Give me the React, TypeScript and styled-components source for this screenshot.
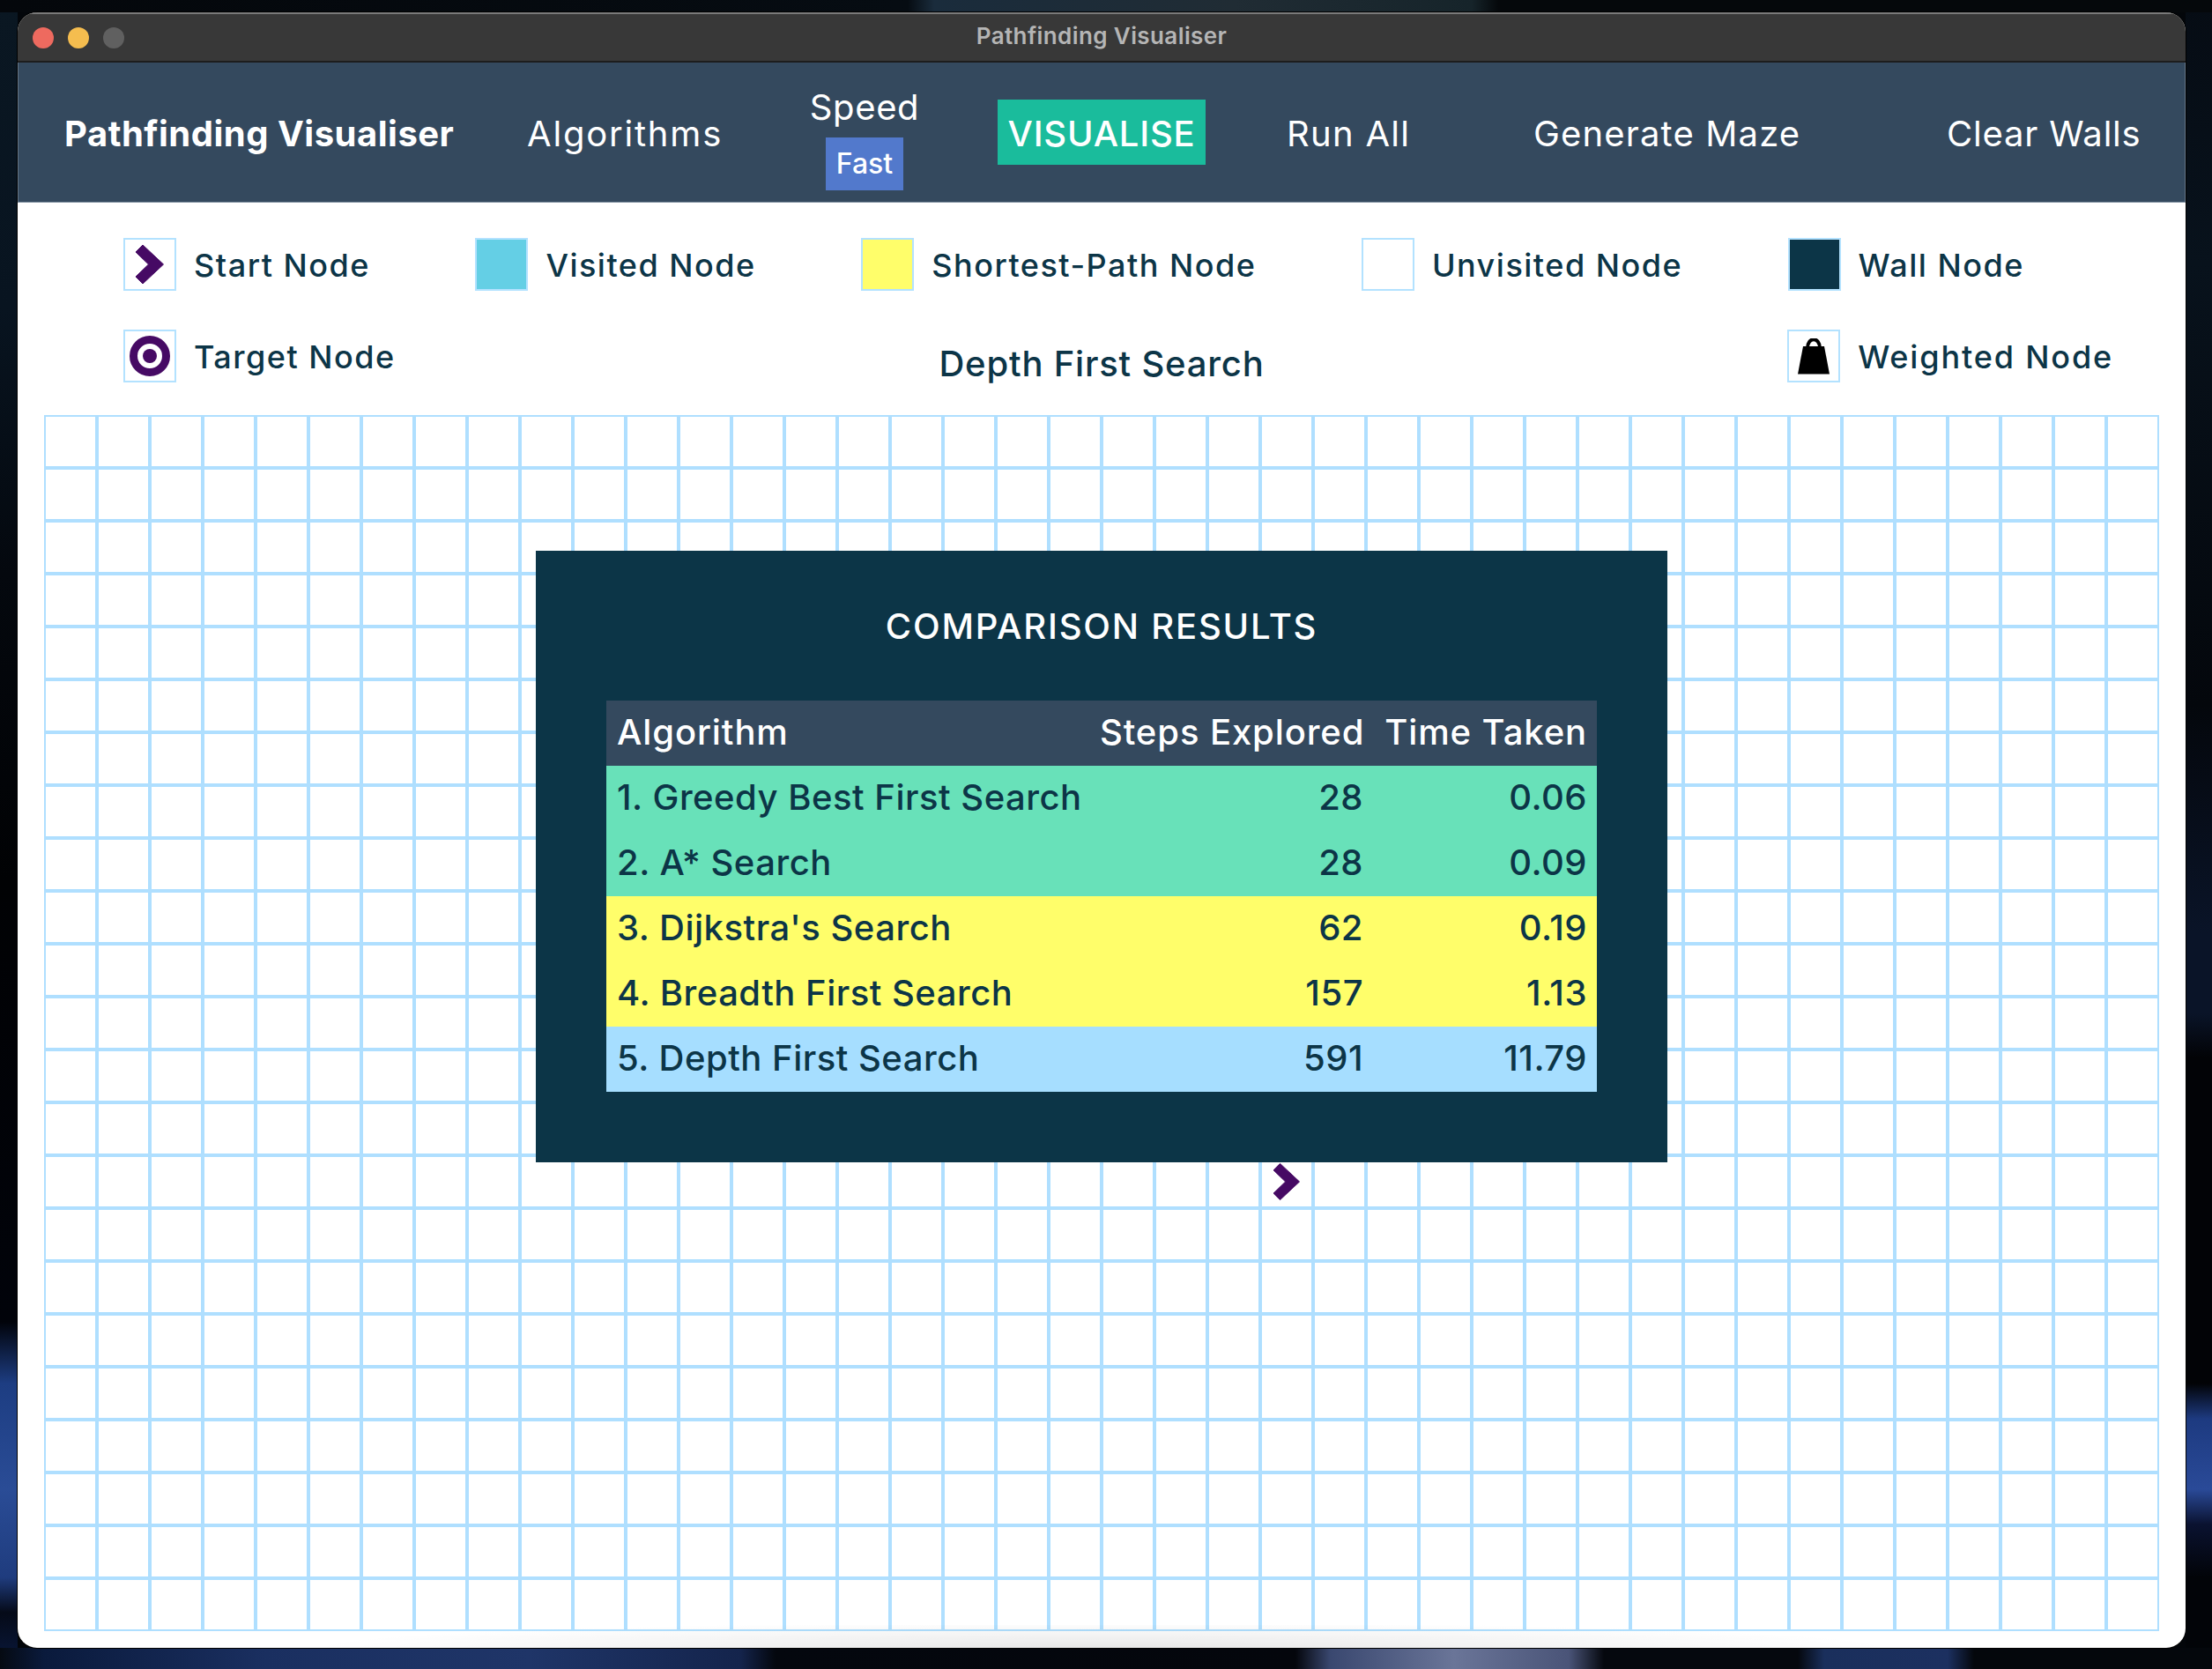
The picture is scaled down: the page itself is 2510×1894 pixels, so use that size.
import React from "react";
import styled, { createGlobalStyle } from "styled-components";

const Global = createGlobalStyle`
  html, body { margin: 0; padding: 0; }
  body {
    width: 2510px;
    height: 1894px;
    overflow: hidden;
    font-family: Inter, "Liberation Sans", sans-serif;
    background-color: #03060a;
    background-repeat: no-repeat;
    background-image:
      linear-gradient(90deg, #050a12 0, #0a1a3c 50px, #1a2f60 300px, #1f3568 600px, #14244c 840px, #04070e 880px, #04060c 1470px, #3a4870 1510px, #6a7598 1650px, #4a5478 1780px, #05080e 1820px, #05080e 2040px, #1a2f5c 2070px, #1c3060 2210px, #04070c 2240px),
      linear-gradient(90deg, #04070b 0, #060c12 1030px, #1a2c3c 1060px, #202c34 1400px, #16242a 1670px, #05080b 1700px),
      linear-gradient(180deg, #0a1722 0, #081420 350px, #04080e 650px, #010204 1000px, #01030a 1500px, #1d3d82 1570px, #2a4c96 1690px, #1f3c7e 1790px, #050a18 1830px, #0a1a40 1894px),
      linear-gradient(180deg, #060c14 0, #08121c 300px, #04070c 800px, #0a1428 1060px, #0a1428 1150px, #020306 1200px, #020306 1570px, #1d3a80 1610px, #2a4a98 1690px, #0a1230 1730px, #020408 1790px);
    background-size: 2510px 24px, 2510px 14px, 20px 1894px, 30px 1894px;
    background-position: 0 1870px, 0 0, 0 0, 2480px 0;
  }
`;

const Win = styled.div`
  position: relative;
  width: 2460px;
  height: 1856px;
  margin: 14px 30px 24px 20px;
  border-radius: 22px;
  background: #fff;
  overflow: hidden;
  box-shadow: 0 0 0 1px #000;
  &::after {
    content: "";
    position: absolute;
    left: 0;
    right: 0;
    bottom: 0;
    height: 26px;
    background: radial-gradient(ellipse 900px 30px at 50% 100%, rgba(0, 0, 0, 0.09), transparent);
    pointer-events: none;
  }
`;

const TitleBar = styled.div`
  height: 57px;
  box-sizing: border-box;
  background: #383838;
  border-top: 2px solid #7a7a7a;
  border-bottom: 2px solid #1d1d1d;
  display: flex;
  align-items: center;
  padding-left: 17px;
  position: relative;
`;
const Light = styled.span<{ $c: string }>`
  width: 24px;
  height: 24px;
  border-radius: 50%;
  background: ${(p) => p.$c};
  margin-right: 16px;
`;
const TitleText = styled.div`
  position: absolute;
  left: 0;
  right: 0;
  top: 9px;
  text-align: center;
  color: #b5b5b5;
  font-size: 26px;
  font-weight: 600;
  letter-spacing: 0.4px;
`;

const Nav = styled.nav`
  height: 159px;
  box-sizing: border-box;
  background: #34495e;
  border-bottom: 1px solid #8695a4;
  box-shadow: inset 1px 0 #66788a, inset -1px 0 #66788a;
  display: flex;
  align-items: center;
  color: #fff;
  padding-left: 53px;
`;
const NavItem = styled.div<{ $w: number; $ls: number; $bold?: boolean }>`
  flex: 0 0 auto;
  width: ${(p) => p.$w}px;
  padding-top: 3px;
  font-size: 40px;
  letter-spacing: ${(p) => p.$ls}px;
  font-weight: ${(p) => (p.$bold ? 700 : 400)};
  white-space: nowrap;
`;
const SpeedBox = styled.div`
  width: 124px;
  display: flex;
  flex-direction: column;
  align-items: center;
  margin-right: 89px;
  padding-top: 12px;
`;
const SpeedLabel = styled.div`
  font-size: 40px;
  letter-spacing: 0.6px;
  line-height: 46px;
  margin-top: 2px;
`;
const FastChip = styled.div`
  margin-top: 11px;
  width: 88px;
  height: 60px;
  background: #5279cc;
  font-size: 32px;
  font-weight: 500;
  display: flex;
  align-items: center;
  justify-content: center;
`;
const VisualiseBtn = styled.div`
  flex: 0 0 auto;
  width: 236px;
  height: 74px;
  background: #1abc9c;
  font-size: 40px;
  font-weight: 500;
  letter-spacing: 0.8px;
  padding-top: 3px;
  box-sizing: border-box;
  display: flex;
  align-items: center;
  justify-content: center;
  margin-right: 92px;
`;

const LegendRow = styled.div`
  display: flex;
  gap: 119.5px;
  padding: 40px 0 0 120px;
`;
const LegendRowTwo = styled.div`
  display: grid;
  grid-template-columns: 1fr auto 1fr;
  padding: 44px 82px 0;
  height: 97px;
  box-sizing: content-box;
`;
const LegendItem = styled.div<{ $ml?: number; $end?: boolean }>`
  display: flex;
  align-items: center;
  gap: 20px;
  height: 60px;
  margin-left: ${(p) => p.$ml ?? 0}px;
  justify-self: ${(p) => (p.$end ? "end" : "start")};
`;
const Swatch = styled.div<{ $bg?: string }>`
  width: 60px;
  height: 60px;
  box-sizing: border-box;
  border: 2px solid #b3e2ff;
  background: ${(p) => p.$bg ?? "#fff"};
  display: flex;
  align-items: center;
  justify-content: center;
  flex: none;
`;
const LegendLabel = styled.span<{ $ls?: number }>`
  color: #0c3547;
  font-size: 36px;
  font-weight: 500;
  letter-spacing: ${(p) => p.$ls ?? 1.5}px;
  padding-top: 1px;
  white-space: nowrap;
`;
const AlgoTitle = styled.div`
  color: #0c3547;
  font-size: 40px;
  font-weight: 500;
  letter-spacing: 0.8px;
  white-space: nowrap;
  padding-top: 14px;
`;

const Board = styled.div`
  margin: 0 30px;
  display: grid;
  grid-template-columns: repeat(40, 60px);
  grid-auto-rows: 60px;
  position: relative;
  width: 2400px;
`;
const Cell = styled.div`
  box-sizing: border-box;
  border: 2px solid #afdfff;
  display: flex;
  align-items: center;
  justify-content: center;
`;

const Modal = styled.div`
  position: absolute;
  left: 558px;
  top: 154px;
  width: 1284px;
  height: 694px;
  box-sizing: border-box;
  background: #0c3547;
  padding: 0 80px;
`;
const ModalTitle = styled.div`
  color: #fff;
  font-size: 40px;
  font-weight: 500;
  letter-spacing: 1.8px;
  height: 170px;
  display: flex;
  align-items: center;
  justify-content: center;
`;
const Table = styled.table`
  width: 1124px;
  border-collapse: collapse;
  table-layout: fixed;
  font-size: 40px;
`;
const Row = styled.tr<{ $bg: string; $fg: string }>`
  height: 74px;
  background: ${(p) => p.$bg};
  color: ${(p) => p.$fg};
`;
const Th = styled.th<{ $right?: boolean; $pr?: number }>`
  font-weight: 500;
  letter-spacing: 0.9px;
  padding: 0 ${(p) => p.$pr ?? 14}px 3px 12px;
  text-align: ${(p) => (p.$right ? "right" : "left")};
  white-space: nowrap;
`;
const Td = styled.td<{ $right?: boolean; $pr?: number }>`
  font-weight: 500;
  letter-spacing: 0.5px;
  padding: 0 ${(p) => p.$pr ?? 14}px 3px 12px;
  text-align: ${(p) => (p.$right ? "right" : "left")};
  white-space: nowrap;
`;

const Chevron = ({ w = 32, h = 44 }: { w?: number; h?: number }) => (
  <svg width={w} height={h} viewBox="0 0 32 44">
    <path
      d="M8 0 L31.5 22 L8 44 L0 36 L14.5 22 L0 8 Z"
      fill="#460a64"
      stroke="#460a64"
      strokeWidth="1"
      strokeLinejoin="round"
    />
  </svg>
);
const Target = () => (
  <svg width="46" height="46" viewBox="0 0 46 46">
    <circle cx="23" cy="23" r="18.5" fill="none" stroke="#460a64" strokeWidth="9" />
    <circle cx="23" cy="23" r="8" fill="#460a64" />
  </svg>
);
const Weight = () => (
  <svg width="36" height="41" viewBox="0 0 36 41">
    <path d="M11 11 C11 -2 25 -2 25 11" fill="none" stroke="#000" strokeWidth="4" />
    <path d="M6 9 H30 L36 40.5 H0 Z" fill="#000" />
  </svg>
);

const rows = [
  { n: "1. Greedy Best First Search", s: 28, t: "0.06", bg: "#68e1b9" },
  { n: "2. A* Search", s: 28, t: "0.09", bg: "#68e1b9" },
  { n: "3. Dijkstra's Search", s: 62, t: "0.19", bg: "#fffe6a" },
  { n: "4. Breadth First Search", s: 157, t: "1.13", bg: "#fffe6a" },
  { n: "5. Depth First Search", s: 591, t: "11.79", bg: "#a6deff" },
];

export default function App() {
  return (
    <>
      <Global />
      <Win>
        <TitleBar>
          <Light $c="#ee6a5f" />
          <Light $c="#f5bd4f" />
          <Light $c="#606060" />
          <TitleText>Pathfinding Visualiser</TitleText>
        </TitleBar>
        <Nav>
          <NavItem $w={525} $ls={0.5} $bold>Pathfinding Visualiser</NavItem>
          <NavItem $w={321} $ls={1.8}>Algorithms</NavItem>
          <SpeedBox>
            <SpeedLabel>Speed</SpeedLabel>
            <FastChip>Fast</FastChip>
          </SpeedBox>
          <VisualiseBtn>VISUALISE</VisualiseBtn>
          <NavItem $w={280} $ls={1.3}>Run All</NavItem>
          <NavItem $w={469} $ls={1.15}>Generate Maze</NavItem>
          <NavItem $w={218} $ls={0.8}>Clear Walls</NavItem>
        </Nav>
        <LegendRow>
          <LegendItem>
            <Swatch><Chevron /></Swatch>
            <LegendLabel>Start Node</LegendLabel>
          </LegendItem>
          <LegendItem>
            <Swatch $bg="#64cfe5" />
            <LegendLabel>Visited Node</LegendLabel>
          </LegendItem>
          <LegendItem>
            <Swatch $bg="#fffe6a" />
            <LegendLabel>Shortest-Path Node</LegendLabel>
          </LegendItem>
          <LegendItem>
            <Swatch />
            <LegendLabel>Unvisited Node</LegendLabel>
          </LegendItem>
          <LegendItem>
            <Swatch $bg="#0c3547" />
            <LegendLabel>Wall Node</LegendLabel>
          </LegendItem>
        </LegendRow>
        <LegendRowTwo>
          <LegendItem $ml={38}>
            <Swatch><Target /></Swatch>
            <LegendLabel>Target Node</LegendLabel>
          </LegendItem>
          <AlgoTitle>Depth First Search</AlgoTitle>
          <LegendItem $end>
            <Swatch><Weight /></Swatch>
            <LegendLabel $ls={1.85}>Weighted Node</LegendLabel>
          </LegendItem>
        </LegendRowTwo>
        <Board>
          {Array.from({ length: 920 }, (_, i) => (
            <Cell key={i}>{i === 14 * 40 + 23 ? <Chevron w={30} h={44} /> : null}</Cell>
          ))}
          <Modal>
            <ModalTitle>COMPARISON RESULTS</ModalTitle>
            <Table>
              <colgroup>
                <col style={{ width: 548 }} />
                <col style={{ width: 320 }} />
                <col style={{ width: 256 }} />
              </colgroup>
              <thead>
                <Row $bg="#34495e" $fg="#fff">
                  <Th>Algorithm</Th>
                  <Th $right>Steps Explored</Th>
                  <Th $right $pr={11}>Time Taken</Th>
                </Row>
              </thead>
              <tbody>
                {rows.map((r) => (
                  <Row key={r.n} $bg={r.bg} $fg="#0c3547">
                    <Td>{r.n}</Td>
                    <Td $right $pr={9}>{r.s}</Td>
                    <Td $right $pr={11}>{r.t}</Td>
                  </Row>
                ))}
              </tbody>
            </Table>
          </Modal>
        </Board>
      </Win>
    </>
  );
}
